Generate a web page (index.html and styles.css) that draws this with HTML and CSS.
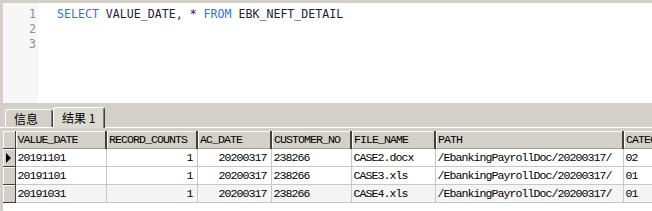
FILE: index.html
```html
<!DOCTYPE html>
<html>
<head>
<meta charset="utf-8">
<link rel="stylesheet" href="styles.css">
</head>
<body>
<div class="editor">
  <div class="gutter">
    <div>1</div>
    <div>2</div>
    <div>3</div>
  </div>
  <div class="code"><div class="line"><span class="kw">SELECT</span> VALUE_DATE, * <span class="kw">FROM</span> EBK_NEFT_DETAIL</div></div>
</div>
<div class="tabs">
  <div class="tab">信息</div>
  <div class="tab active">结果 1</div>
</div>
<div class="grid-wrap">
  <table class="grid">
    <colgroup>
      <col style="width:12px">
      <col style="width:91px">
      <col style="width:91px">
      <col style="width:74px">
      <col style="width:80px">
      <col style="width:84px">
      <col style="width:188px">
      <col style="width:60px">
    </colgroup>
    <thead>
      <tr>
        <th class="ind"></th>
        <th>VALUE_DATE</th>
        <th>RECORD_COUNTS</th>
        <th>AC_DATE</th>
        <th>CUSTOMER_NO</th>
        <th>FILE_NAME</th>
        <th>PATH</th>
        <th>CATEGORY</th>
      </tr>
    </thead>
    <tbody>
      <tr>
        <td class="ind"><span class="arrow"></span></td>
        <td>20191101</td>
        <td class="num">1</td>
        <td class="num">20200317</td>
        <td>238266</td>
        <td>CASE2.docx</td>
        <td>/EbankingPayrollDoc/20200317/</td>
        <td>02</td>
      </tr>
      <tr>
        <td class="ind"></td>
        <td>20191101</td>
        <td class="num">1</td>
        <td class="num">20200317</td>
        <td>238266</td>
        <td>CASE3.xls</td>
        <td>/EbankingPayrollDoc/20200317/</td>
        <td>01</td>
      </tr>
      <tr class="alt">
        <td class="ind"></td>
        <td>20191031</td>
        <td class="num">1</td>
        <td class="num">20200317</td>
        <td>238266</td>
        <td>CASE4.xls</td>
        <td>/EbankingPayrollDoc/20200317/</td>
        <td>01</td>
      </tr>
    </tbody>
  </table>
</div>
</body>
</html>
```
FILE: styles.css
```css
html, body {
  margin: 0;
  padding: 0;
}
body {
  background: #d4d0c8;
  width: 652px;
  height: 211px;
  overflow: hidden;
}
.editor {
  margin: 3px 0 0 3px;
  height: 100px;
  display: flex;
  font-family: "DejaVu Sans Mono", monospace;
  font-size: 11.6px;
  line-height: 15px;
}
.gutter {
  width: 33px;
  padding: 4px 2px 0 0;
  background: #f7f7f7;
  color: #8a8a9e;
  text-align: right;
}
.code {
  flex: 1;
  background: #fff;
  padding: 4px 0 0 19px;
  color: #1f2238;
}
.line {
  white-space: pre;
}
.kw {
  color: #2a74e8;
}
.tabs {
  display: flex;
  align-items: flex-end;
  height: 24px;
  padding-left: 5px;
  border-bottom: 1px solid #ffffff;
  font-family: "Noto Sans CJK SC", "Liberation Serif", serif;
  font-size: 12px;
  color: #000;
}
.tab {
  height: 17px;
  line-height: 17px;
  padding: 0 8px;
  width: 30px;
  background: #d4d0c8;
  border: 1px solid #ffffff;
  border-right: 1px solid #404040;
  border-bottom: none;
  border-radius: 3px 3px 0 0;
  box-shadow: inset -1px 0 0 #808080;
}
.tab.active {
  height: 20px;
  line-height: 20px;
  width: 34px;
  margin-bottom: -1px;
  background: #dcd9d1;
}
.grid-wrap {
  margin: 3px 0 0 3px;
  background: #fff;
  height: 80px;
  overflow: hidden;
}
.grid {
  table-layout: fixed;
  border-collapse: collapse;
  width: 680px;
  font-family: "Liberation Mono", monospace;
  font-size: 11.6px;
  letter-spacing: -0.96px;
  color: #000;
}
.grid th, .grid td {
  padding: 0 0 0 2px;
  white-space: nowrap;
  overflow: hidden;
  text-align: left;
  font-weight: normal;
}
.grid th {
  height: 17px;
  background: #d4d0c8;
  border-right: 2px solid #404040;
  box-shadow: inset 1px 1px 0 #ffffff;
  border-bottom: 1px solid #a0a0a0;
}
.grid td {
  height: 17px;
  background: #fff;
  border-right: 1px solid #c8c8c8;
  border-bottom: 1px solid #c8c8c8;
}
.grid tr.alt td {
  background: #f5f5f5;
}
.grid td.num {
  text-align: right;
  padding: 0 4px 0 0;
}
.grid .ind {
  padding: 0;
  background: #d4d0c8;
  border-right: 1px solid #404040;
  border-bottom: 1px solid #404040;
  box-shadow: inset 1px 1px 0 #ffffff;
}
.grid tr.alt td.ind {
  background: #d4d0c8;
}
.arrow {
  display: block;
  width: 0;
  height: 0;
  margin-left: 3px;
  border-top: 5px solid transparent;
  border-bottom: 5px solid transparent;
  border-left: 5px solid #000;
}
```
